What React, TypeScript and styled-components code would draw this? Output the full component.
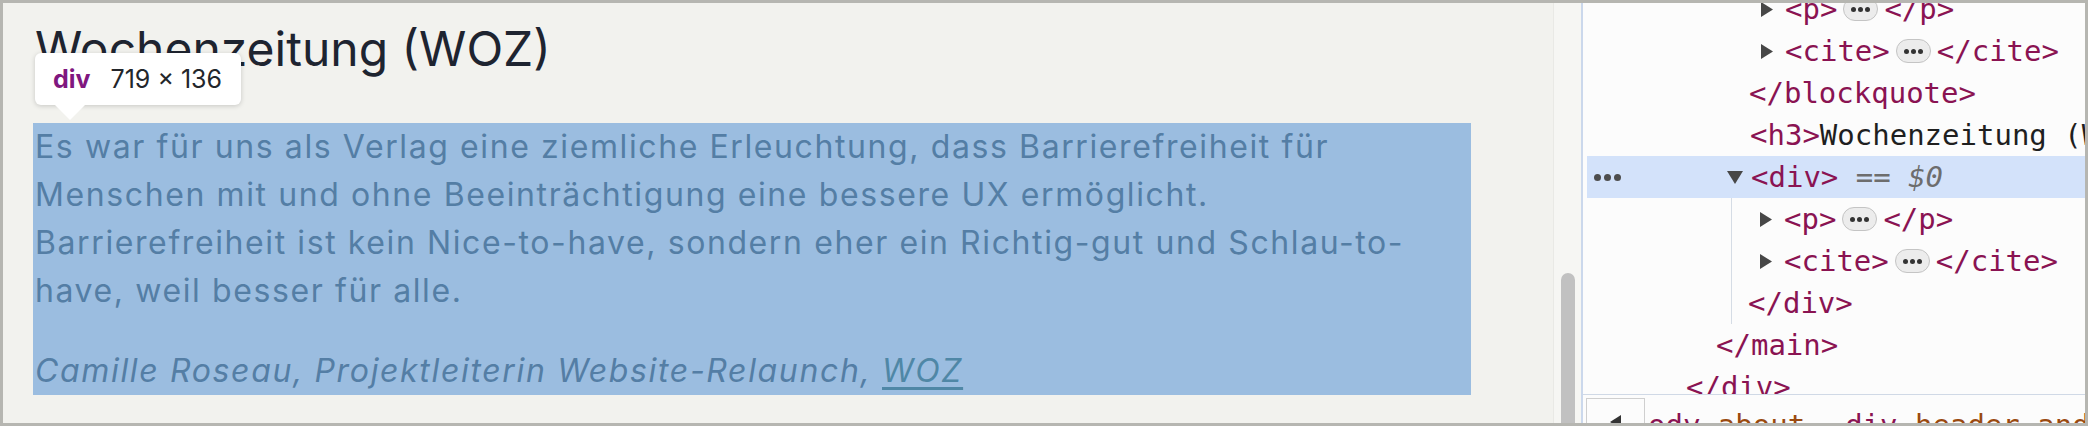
import React from "react"
import styled, {createGlobalStyle} from "styled-components"

const GlobalStyle = createGlobalStyle`
  body {
    margin: 0;
    font-family: "Inter", "Liberation Sans", sans-serif;
  }
`

const Frame = styled.div`
  width: 2088px;
  height: 426px;
  box-sizing: border-box;
  border: 3px solid #b6b6b1;
  display: flex;
  overflow: hidden;
  background: #f2f2ee;
`

const PagePane = styled.section`
  position: relative;
  flex: none;
  width: 1550px;
  box-sizing: border-box;
  padding: 16px 0 0 30px;
  background: #f2f2ee;
`

const Heading = styled.h3`
  margin: 0 0 45px;
  padding-left: 2px;
  font-size: 48px;
  font-weight: 400;
  line-height: normal;
  color: #1e2430;
`

const Quote = styled.div`
  width: 1438px;
  background: #9bbde0;
  color: #547ea5;
`

const QuoteText = styled.p`
  margin: 0 0 32px;
  padding-left: 2px;
  font-size: 32px;
  line-height: 48px;
  letter-spacing: 1.6px;
`

const Cite = styled.cite`
  display: block;
  padding-left: 2px;
  font-size: 32px;
  line-height: 48px;
  font-style: italic;
  letter-spacing: 1.65px;
`

const CiteLink = styled.a`
  color: #4f87a6;
  text-decoration: underline;
  text-underline-offset: 5px;
`

const Tooltip = styled.div`
  position: absolute;
  left: 32px;
  top: 50px;
  width: 206px;
  height: 52px;
  box-sizing: border-box;
  padding-left: 18px;
  display: flex;
  align-items: center;
  gap: 20px;
  background: #fff;
  border-radius: 6px;
  box-shadow: 0 1px 5px rgba(0, 0, 0, 0.18);
  font-size: 25px;
  color: #23262b;
  z-index: 2;

  &::after {
    content: "";
    position: absolute;
    left: 20px;
    top: 100%;
    border-left: 15px solid transparent;
    border-right: 15px solid transparent;
    border-top: 15px solid #fff;
  }
`

const TooltipTag = styled.span`
  font-weight: 700;
  color: #80177f;
`

const ScrollTrack = styled.div`
  flex: none;
  width: 28px;
  box-sizing: border-box;
  padding: 270px 0 0 7px;
  background: #f6f6f3;
  border-left: 1px solid #e9e9e5;
  display: flex;
`

const Thumb = styled.div`
  width: 14px;
  border-radius: 7px 7px 0 0;
  background: #c1c1c1;
`

const Devtools = styled.aside`
  flex: 1;
  min-width: 0;
  display: flex;
  flex-direction: column;
  border-left: 2px solid #cbd8ec;
  background: #fcfcfc;
  overflow: hidden;
  font-family: "DejaVu Sans Mono", "Liberation Mono", monospace;
  font-size: 29px;
`

const Tree = styled.div`
  flex: 1;
  overflow: hidden;
  padding-left: 4px;
`

const TreeScroll = styled.div`
  margin-top: -15px;
`

const Row = styled.div<{$selected?: boolean}>`
  display: flex;
  align-items: center;
  height: 42px;
  white-space: nowrap;
  color: #1f1f1f;
  background: ${p => (p.$selected ? "#d3e2fa" : "transparent")};
`

const Gutter = styled.div<{$width: number}>`
  flex: none;
  width: ${p => p.$width}px;
  box-sizing: border-box;
  padding-left: 7px;
  display: flex;
  align-items: center;
`

const Dots = styled.div`
  display: flex;
  gap: 3px;
  & > i {
    width: 7px;
    height: 7px;
    border-radius: 50%;
    background: #4d4d4d;
  }
`

const ArrowSlot = styled.span`
  flex: none;
  width: 24px;
  display: flex;
  align-items: center;
`

const Tag = styled.span`
  color: #8a1352;
`

const Muted = styled.span<{$italic?: boolean}>`
  color: #6d6d6d;
  font-style: ${p => (p.$italic ? "italic" : "normal")};
`

const Pill = styled.span`
  display: inline-flex;
  align-items: center;
  justify-content: center;
  gap: 2px;
  width: 35px;
  height: 24px;
  margin: 0 6px;
  box-sizing: border-box;
  border: 1px solid #c4c4c4;
  border-radius: 12px;
  background: #ececec;
  & > i {
    width: 5px;
    height: 5px;
    border-radius: 50%;
    background: #333;
  }
`

const ChildGroup = styled.div`
  margin-left: 144px;
  border-left: 1px solid #d5dce5;
`

const Crumbs = styled.div`
  flex: none;
  height: 29px;
  box-sizing: border-box;
  border-top: 1px solid #d0d9e6;
  padding-left: 3px;
  display: flex;
  align-items: flex-start;
  overflow: hidden;
  background: #fcfcfc;
`

const CrumbButton = styled.div`
  flex: none;
  width: 59px;
  height: 40px;
  margin-top: 3px;
  box-sizing: border-box;
  border: 1px solid #cfcfcf;
  display: flex;
  justify-content: center;
  padding-top: 16px;
`

const Crumb = styled.span<{$first?: boolean}>`
  padding-top: 13px;
  margin-left: ${p => (p.$first ? "3px" : "40px")};
  white-space: nowrap;
  line-height: normal;
`

const CrumbClass = styled.span`
  color: #9a4a10;
`

const RightArrow = () => (
  <svg width="12" height="15" viewBox="0 0 12 15">
    <polygon points="0,0 12,7.5 0,15" fill="#474747" />
  </svg>
)

const DownArrow = () => (
  <svg width="16" height="13" viewBox="0 0 16 13">
    <polygon points="0,0 16,0 8,13" fill="#474747" />
  </svg>
)

const Ellipsis = () => (
  <Pill>
    <i />
    <i />
    <i />
  </Pill>
)

type NodeRowProps = {
  indent: number
  arrow?: "right" | "down"
  selected?: boolean
  children: React.ReactNode
}

function NodeRow({indent, arrow, selected, children}: NodeRowProps) {
  return (
    <Row $selected={selected}>
      <Gutter $width={arrow ? indent - 24 : indent}>
        {selected && (
          <Dots>
            <i />
            <i />
            <i />
          </Dots>
        )}
      </Gutter>
      {arrow && <ArrowSlot>{arrow === "down" ? <DownArrow /> : <RightArrow />}</ArrowSlot>}
      {children}
    </Row>
  )
}

export default function App() {
  return (
    <>
      <GlobalStyle />
      <Frame>
        <PagePane>
          <Heading>Wochenzeitung (WOZ)</Heading>
          <Tooltip>
            <TooltipTag>div</TooltipTag>
            <span>719 × 136</span>
          </Tooltip>
          <Quote>
            <QuoteText>
              Es war für uns als Verlag eine ziemliche Erleuchtung, dass Barrierefreiheit für
              <br />
              Menschen mit und ohne Beeinträchtigung eine bessere UX ermöglicht.
              <br />
              Barrierefreiheit ist kein Nice-to-have, sondern eher ein Richtig-gut und Schlau-to-
              <br />
              have, weil besser für alle.
            </QuoteText>
            <Cite>
              Camille Roseau, Projektleiterin Website-Relaunch, <CiteLink>WOZ</CiteLink>
            </Cite>
          </Quote>
        </PagePane>

        <ScrollTrack>
          <Thumb />
        </ScrollTrack>

        <Devtools>
          <Tree>
            <TreeScroll>
              <NodeRow indent={198} arrow="right">
                <Tag>{"<p>"}</Tag>
                <Ellipsis />
                <Tag>{"</p>"}</Tag>
              </NodeRow>
              <NodeRow indent={198} arrow="right">
                <Tag>{"<cite>"}</Tag>
                <Ellipsis />
                <Tag>{"</cite>"}</Tag>
              </NodeRow>
              <NodeRow indent={162}>
                <Tag>{"</blockquote>"}</Tag>
              </NodeRow>
              <NodeRow indent={163}>
                <Tag>{"<h3>"}</Tag>
                Wochenzeitung (WOZ)
                <Tag>{"</h3>"}</Tag>
              </NodeRow>
              <NodeRow indent={164} arrow="down" selected>
                <Tag>{"<div>"}</Tag>
                <Muted>&nbsp;==&nbsp;</Muted>
                <Muted $italic>$0</Muted>
              </NodeRow>
              <ChildGroup>
                <NodeRow indent={52} arrow="right">
                  <Tag>{"<p>"}</Tag>
                  <Ellipsis />
                  <Tag>{"</p>"}</Tag>
                </NodeRow>
                <NodeRow indent={52} arrow="right">
                  <Tag>{"<cite>"}</Tag>
                  <Ellipsis />
                  <Tag>{"</cite>"}</Tag>
                </NodeRow>
                <NodeRow indent={16}>
                  <Tag>{"</div>"}</Tag>
                </NodeRow>
              </ChildGroup>
              <NodeRow indent={129}>
                <Tag>{"</main>"}</Tag>
              </NodeRow>
              <NodeRow indent={99}>
                <Tag>{"</div>"}</Tag>
              </NodeRow>
            </TreeScroll>
          </Tree>
          <Crumbs>
            <CrumbButton>
              <svg width="11" height="14" viewBox="0 0 11 14">
                <polygon points="11,0 11,14 0,7" fill="#333" />
              </svg>
            </CrumbButton>
            <Crumb $first>
              <Tag>ody</Tag>
              <CrumbClass>.about</CrumbClass>
            </Crumb>
            <Crumb>
              <Tag>div</Tag>
              <CrumbClass>.header-and-main</CrumbClass>
            </Crumb>
          </Crumbs>
        </Devtools>
      </Frame>
    </>
  )
}
